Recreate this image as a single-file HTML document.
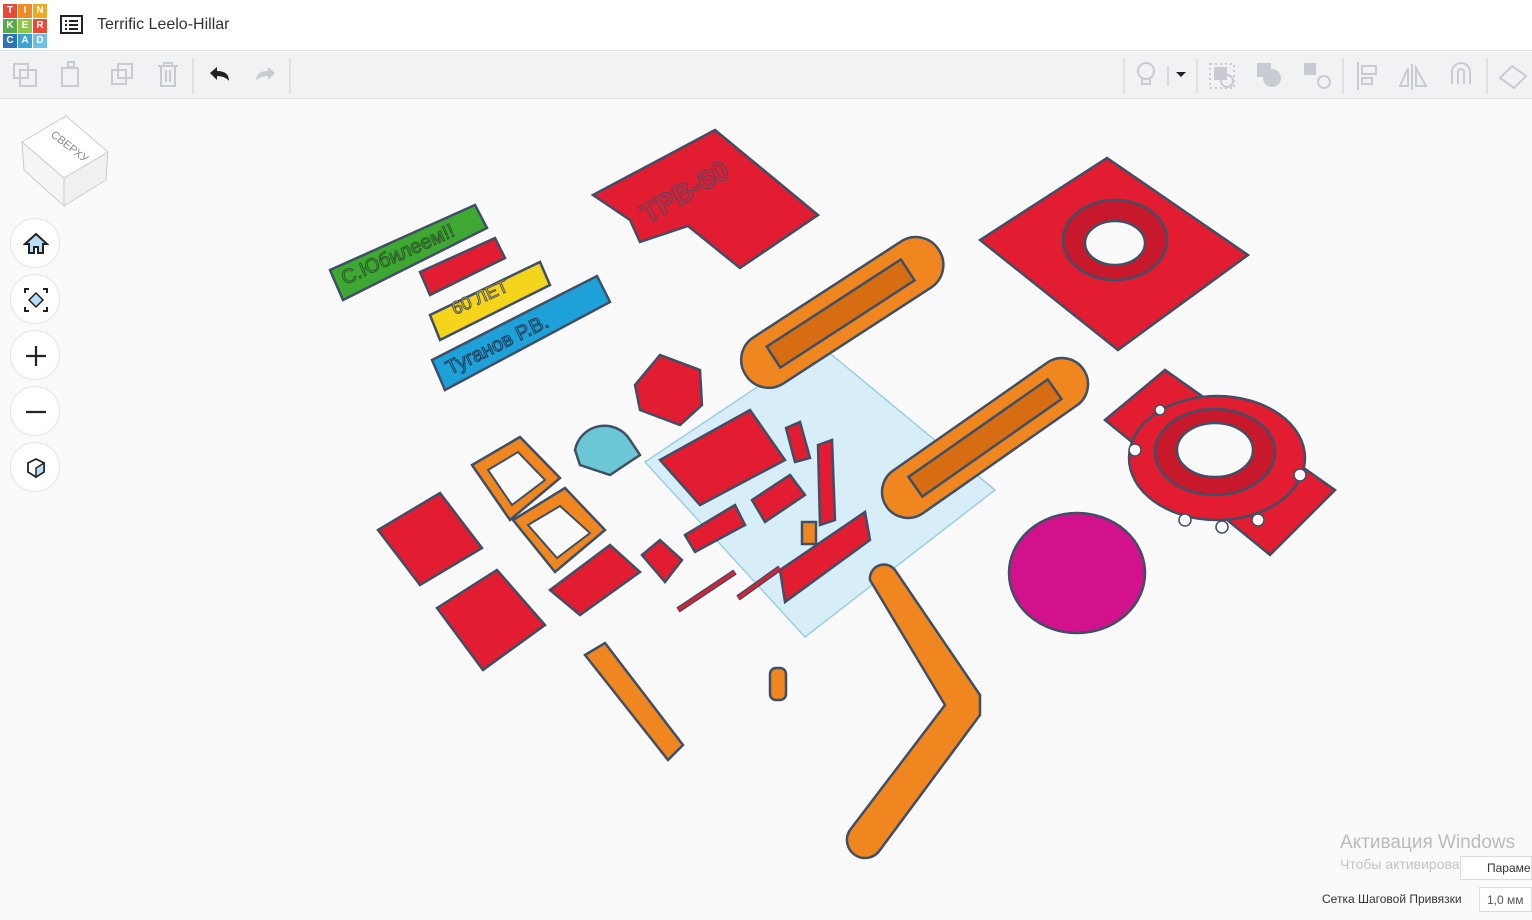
<!DOCTYPE html>
<html><head><meta charset="utf-8"><style>
*{margin:0;padding:0;box-sizing:border-box}
body{width:1532px;height:920px;overflow:hidden;background:#fafafa;font-family:"Liberation Sans","DejaVu Sans",sans-serif;position:relative}
#hdr{position:absolute;left:0;top:0;width:1532px;height:51px;background:#fff;border-bottom:1px solid #e2e3e5}
#tb{position:absolute;left:0;top:52px;width:1532px;height:47px;background:#f1f2f4;border-bottom:1px solid #e0e1e3}
.logo{position:absolute;left:3px;top:4px;display:grid;grid-template-columns:repeat(3,14px);grid-gap:1px}
.logo div{height:14px;color:#fff;font-size:10px;font-weight:bold;text-align:center;line-height:14px}
.title{position:absolute;left:97px;top:16px;font-size:16px;color:#333}
.btn{position:absolute;left:10px;width:50px;height:50px;border-radius:50%;background:#fff;border:1px solid #e4e4e4}
.btn svg{position:absolute;left:12px;top:12px}
.nw{white-space:nowrap}
</style></head><body>
<div id="hdr">
<div class="logo">
<div style="background:#e94a35">T</div><div style="background:#f08a24">I</div><div style="background:#f0a81e">N</div>
<div style="background:#5aa94a">K</div><div style="background:#8fc64a">E</div><div style="background:#e94a35">R</div>
<div style="background:#2e74b5">C</div><div style="background:#38a3d8">A</div><div style="background:#6cc0e6">D</div>
</div>
<svg style="position:absolute;left:60px;top:15px" width="24" height="20"><rect x="1" y="1" width="21" height="17" fill="none" stroke="#222" stroke-width="2"/><path d="M5 6h2M9 6h9M5 10h2M9 10h9M5 14h2M9 14h9" stroke="#222" stroke-width="2"/></svg>
<div class="title">Terrific Leelo-Hillar</div>
</div>
<div id="tb">
<svg width="1532" height="47" style="position:absolute;left:0;top:0" fill="none" stroke="#c8ccd2" stroke-width="2">
<rect x="14" y="12" width="14" height="14"/><rect x="20" y="18" width="16" height="16"/>
<rect x="62" y="16" width="16" height="18"/><rect x="68" y="10" width="6" height="5"/>
<rect x="112" y="18" width="14" height="14"/><rect x="118" y="12" width="14" height="14"/>
<path d="M158 14h20M164 14v-3h8v3M161 14v20h14v-20M166 18v12M170 18v12"/>
<line x1="193" y1="6" x2="193" y2="42" stroke="#e0e1e3"/>
<path d="M210 21 l7 -6 v4 q12 0 12 10 q-4 -5 -12 -5 v4z" fill="#222" stroke="none"/>
<path d="M275 21 l-7 -6 v4 q-12 0 -12 10 q4 -5 12 -5 v4z" fill="#c8ccd2" stroke="none"/>
<line x1="290" y1="6" x2="290" y2="42" stroke="#e0e1e3"/>
<line x1="1124" y1="6" x2="1124" y2="42" stroke="#e0e1e3"/>
<circle cx="1146" cy="19" r="8"/><path d="M1142 27v5h8v-5"/>
<line x1="1168" y1="14" x2="1168" y2="34" stroke="#d6d8db"/>
<path d="M1176 20h10l-5 5z" fill="#222" stroke="none"/>
<line x1="1197" y1="6" x2="1197" y2="42" stroke="#e0e1e3"/>
<rect x="1210" y="12" width="24" height="24" stroke-dasharray="2 3"/><rect x="1215" y="16" width="11" height="11" fill="#c8ccd2"/><circle cx="1227" cy="29" r="6"/>
<rect x="1258" y="12" width="12" height="12" fill="#c8ccd2"/><circle cx="1272" cy="26" r="8" fill="#c8ccd2"/>
<rect x="1305" y="12" width="10" height="10" fill="#c8ccd2"/><circle cx="1324" cy="30" r="6"/>
<line x1="1343" y1="6" x2="1343" y2="42" stroke="#e0e1e3"/>
<path d="M1358 10v28M1362 14h14v8h-14zM1362 26h10v6h-10z"/>
<path d="M1412 12v26M1408 34h-8l8-18zM1416 34h10l-10-18z"/>
<path d="M1452 32v-12a9 9 0 0118 0v12M1458 32v-12a3 3 0 016 0v12"/>
<line x1="1487" y1="6" x2="1487" y2="42" stroke="#e0e1e3"/>
<path d="M1500 26l12-12 14 10-12 12z"/>
</svg>
</div>

<svg style="position:absolute;left:18px;top:112px" width="95" height="100">
<polygon points="4,30 48,4 90,40 46,66" fill="#fff" stroke="#ccc"/>
<polygon points="4,30 46,66 46,94 6,58" fill="#f5f5f5" stroke="#ccc"/>
<polygon points="46,66 90,40 88,68 46,94" fill="#f0f0f0" stroke="#ccc"/>
<text x="30" y="30" font-size="11" fill="#888" transform="rotate(38 40 30)">СВЕРХУ</text>
</svg>
<div class="btn" style="top:218px"><svg width="26" height="26"><path d="M2 13 L13 3 L24 13 H20 V22 H15 V16 H11 V22 H6 V13Z" fill="#b9dcf8" stroke="#222" stroke-width="2"/></svg></div>
<div class="btn" style="top:274px"><svg width="26" height="26"><path d="M2 6V2h4M20 2h4v4M24 20v4h-4M6 24H2v-4" stroke="#222" stroke-width="2" fill="none"/><path d="M13 6l7 7-7 7-7-7z" fill="#b9dcf8" stroke="#222" stroke-width="1.5"/></svg></div>
<div class="btn" style="top:330px"><svg width="26" height="26"><path d="M13 3v20M3 13h20" stroke="#222" stroke-width="2.2"/></svg></div>
<div class="btn" style="top:386px"><svg width="26" height="26"><path d="M3 13h20" stroke="#222" stroke-width="2.2"/></svg></div>
<div class="btn" style="top:442px"><svg width="26" height="26"><path d="M13 4l8 4v9l-8 5-8-5V8z" fill="#fff" stroke="#222" stroke-width="1.8"/><path d="M13 13v9l8-5V8z" fill="#b9dcf8" stroke="#222" stroke-width="1.5"/></svg></div>

<svg style="position:absolute;left:0;top:0" width="1532" height="920" stroke="#3f4f66" stroke-width="2.5">
<polygon points="645,462 820,345 995,490 805,637" fill="#d7eef8" stroke="#9ccde0" stroke-width="1.5"/>
<polygon points="593,195 715,130 818,215 740,268 688,226 640,242 630,220" fill="#e21c31"/>
<text x="640" y="205" font-size="28" font-weight="bold" fill="#e21c31" stroke="#3f4f66" stroke-width="1" transform="rotate(-30 680 200)">ТРВ-60</text>
<polygon points="980,240 1107,158 1248,255 1118,350" fill="#e21c31"/>
<ellipse cx="1115" cy="240" rx="52" ry="40" fill="#c8192c"/><ellipse cx="1115" cy="243" rx="30" ry="22" fill="#fafafa"/>
<g transform="rotate(-33 842 312)"><rect x="727" y="285" width="230" height="55" rx="27" fill="#f0861f"/><rect x="760" y="300" width="160" height="25" fill="#d66d12"/></g>
<g transform="rotate(-35 985 438)"><rect x="865" y="412" width="240" height="52" rx="26" fill="#f0861f"/><rect x="900" y="426" width="170" height="24" fill="#d66d12"/></g>
<polygon points="1105,420 1165,370 1335,490 1270,555" fill="#e21c31"/>
<ellipse cx="1217" cy="458" rx="88" ry="62" fill="#e21c31"/>
<ellipse cx="1215" cy="452" rx="60" ry="43" fill="#c8192c"/><ellipse cx="1215" cy="450" rx="38" ry="27" fill="#fafafa"/>
<g fill="#fafafa" stroke-width="1.5"><circle cx="1135" cy="450" r="6"/><circle cx="1300" cy="475" r="6"/><circle cx="1185" cy="520" r="6"/><circle cx="1222" cy="527" r="6"/><circle cx="1258" cy="520" r="6"/><circle cx="1160" cy="410" r="5"/></g>
<ellipse cx="1077" cy="573" rx="68" ry="60" fill="#d1128c"/>
<polygon points="330,270 475,205 487,228 343,300" fill="#3ea832"/>
<text x="345" y="285" font-size="20" fill="#3ea832" stroke="#2a5a2a" stroke-width="1" transform="rotate(-24 345 285)">С.Юбилеем!!</text>
<polygon points="420,272 495,238 505,258 430,295" fill="#e21c31"/>
<polygon points="430,315 540,262 550,285 440,340" fill="#f4d51c"/>
<text x="455" y="315" font-size="18" fill="#f4d51c" stroke="#555" stroke-width="1" transform="rotate(-24 455 315)">60 ЛЕТ</text>
<polygon points="432,360 597,276 610,302 445,390" fill="#1da1d8"/>
<text x="450" y="375" font-size="20" fill="#1da1d8" stroke="#1b3a55" stroke-width="1" transform="rotate(-26 450 375)">Туганов Р.В.</text>
<polygon points="635,385 660,355 700,370 702,405 680,425 640,410" fill="#e21c31"/>
<path d="M575,450 a30,30 0 0 1 55,-10 l10,15 -30,20 -30,-10z" fill="#6cc7d4"/>
<polygon points="472,465 520,437 560,478 510,520" fill="#f0861f"/><polygon points="488,470 518,452 545,480 512,505" fill="#fafafa" stroke-width="2"/>
<polygon points="513,520 565,488 605,530 555,572" fill="#f0861f"/><polygon points="528,525 560,506 590,533 557,558" fill="#fafafa" stroke-width="2"/>
<polygon points="378,530 440,493 482,548 420,585" fill="#e21c31"/>
<polygon points="437,608 497,570 545,625 483,670" fill="#e21c31"/>
<polygon points="550,590 610,545 640,572 580,615" fill="#e21c31"/>
<polygon points="660,460 750,410 785,460 700,505" fill="#e21c31"/>
<polygon points="780,570 865,512 870,540 785,602" fill="#e21c31"/>
<polygon points="818,445 832,440 835,520 820,525" fill="#e21c31"/>
<polygon points="752,500 790,475 805,495 765,522" fill="#e21c31"/>
<polygon points="685,535 735,505 745,525 695,552" fill="#e21c31"/>
<polygon points="642,555 660,540 682,560 665,582" fill="#e21c31"/>
<polygon points="786,428 800,422 810,458 795,462" fill="#e21c31"/>
<line x1="678" y1="610" x2="735" y2="572" stroke-width="6"/><line x1="678" y1="610" x2="735" y2="572" stroke="#e21c31" stroke-width="3"/>
<line x1="738" y1="598" x2="780" y2="568" stroke-width="6"/><line x1="738" y1="598" x2="780" y2="568" stroke="#e21c31" stroke-width="3"/>
<rect x="802" y="522" width="14" height="22" fill="#f0861f"/>
<rect x="770" y="668" width="16" height="32" rx="6" fill="#f0861f"/>
<polygon points="585,655 605,643 683,745 668,760" fill="#f0861f"/>
<path d="M870,580 a14,14 0 0 1 25,-10 L980,695 L980,715 L880,850 a14,14 0 0 1 -30,-20 L945,705 Z" fill="#f0861f"/>
</svg>

<div class="nw" style="position:absolute;left:1340px;top:832px;font-size:19px;color:#bbb">Активация Windows</div>
<div class="nw" style="position:absolute;left:1340px;top:856px;font-size:14px;color:#c4c4c4">Чтобы активировать Windows</div>
<div class="nw" style="position:absolute;left:1460px;top:856px;width:72px;height:24px;background:#fff;border:1px solid #ddd;font-size:12px;color:#333;padding:4px 0 0 26px">Параме</div>
<div class="nw" style="position:absolute;left:1322px;top:892px;font-size:12px;color:#333">Сетка Шаговой Привязки</div>
<div class="nw" style="position:absolute;left:1479px;top:887px;width:53px;height:25px;background:#fff;border:1px solid #ddd;font-size:12px;color:#555;padding:5px 0 0 7px">1,0 мм</div>
</body></html>
